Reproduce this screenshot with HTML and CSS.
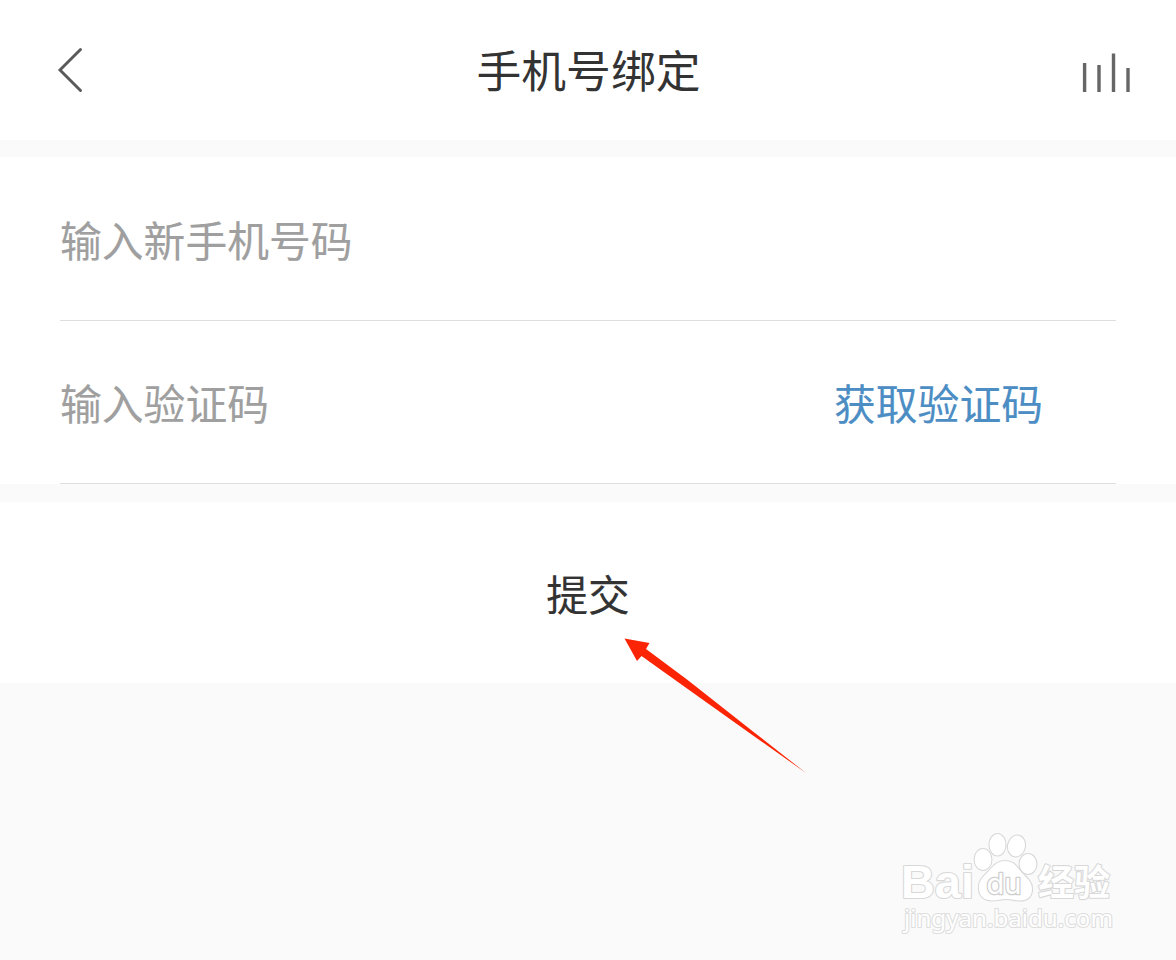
FILE: index.html
```html
<!DOCTYPE html>
<html lang="zh-CN">
<head>
    <meta charset="UTF-8" />
    <meta name="viewport" content="width=device-width, initial-scale=1" />
    <title>手机号绑定</title>
    <link rel="stylesheet" href="styles.css">
</head>
<body>
    <header class="header">
        <button type="button" class="icon-button" aria-label="返回">
            <svg width="28" height="48" viewBox="0 0 28 48" fill="none">
                <path d="M24.5 3.5L4 24L24.5 44.5" stroke="#5a5a5a" stroke-width="2.9" stroke-linecap="round" />
            </svg>
        </button>
        <h1>手机号绑定</h1>
        <button type="button" class="icon-button" aria-label="菜单">
            <svg width="52" height="44" viewBox="0 0 52 44" fill="none">
                <path d="M4.6 11V40M19 13V40M33.5 1.5V40M48 16V40" stroke="#666" stroke-width="3.4" />
            </svg>
        </button>
    </header>

    <form id="bind-form">
        <section class="fields">
            <div class="field">
                <input type="tel" name="phone" placeholder="输入新手机号码" />
            </div>
            <div class="field">
                <input type="text" name="code" placeholder="输入验证码" />
                <button type="button" class="get-code">获取验证码</button>
            </div>
        </section>
        <button type="submit" class="submit">提交</button>
    </form>

    <!-- arrow pointing at the submit button -->
    <svg class="arrow" width="190" height="142" viewBox="620 634 190 142">
        <path d="M624.5 638.5L649.5 643L646 649L687 679.5L753 731.5L806 773L753 735.5L687 688.5L641.5 656L637 661Z" fill="#fb2505" />
    </svg>

    <svg class="watermark" width="240" height="125" viewBox="890 820 240 125">
        <text class="mark" x="901" y="898" font-size="46" textLength="73" lengthAdjust="spacingAndGlyphs">Bai</text>
        <g class="paw">
            <ellipse cx="983" cy="859.5" rx="8.4" ry="10.5" />
            <ellipse cx="997.5" cy="844.8" rx="8" ry="10.7" />
            <ellipse cx="1016.5" cy="846" rx="8.4" ry="10.5" transform="rotate(12 1016.5 846)" />
            <ellipse cx="1028" cy="864" rx="8.4" ry="10" />
            <path d="M1005 861C996 861 992 868 987 873C981 878 978.5 883 979 889C979.5 897 985 900.5 992 900.5C998 900.5 1001 899 1006 899C1011 899 1015 900.5 1020 900.5C1028 900.5 1032 896 1032 889C1032 882 1027 878 1022 873C1017 867 1014 861 1005 861Z" />
        </g>
        <text class="mark du" x="986.5" y="894" font-size="29" textLength="35" lengthAdjust="spacingAndGlyphs">du</text>
        <text class="mark cjk" x="1038" y="896" font-size="36" textLength="72">经验</text>
        <text class="mark site" x="904" y="927" font-size="24" textLength="209" lengthAdjust="spacingAndGlyphs">jingyan.baidu.com</text>
    </svg>
</body>
</html>
```
FILE: styles.css
```css
* {
    box-sizing: border-box;
}
body {
    margin: 0;
    min-height: 100vh;
    background: #fafafa;
    color: #333;
    font-family: 'Noto Sans CJK SC', sans-serif;
    overflow: hidden;
}
button,
input {
    padding: 0;
    border: none;
    background: none;
    color: inherit;
    font-family: inherit;
    font-size: 41.8px;
    -webkit-text-stroke: 0.15px;
}
button {
    cursor: pointer;
}
.header {
    display: grid;
    grid-template-columns: 1fr auto 1fr;
    align-items: center;
    height: 140px;
    padding: 0 44px 0 56px;
    background: #fff;
}
.header h1 {
    margin: 0;
    padding: 0 11px 3px 0;
    font-size: 44.8px;
    font-weight: 400;
}
.icon-button {
    display: flex;
}
.icon-button:last-child {
    justify-self: end;
    padding-top: 8px;
}
.fields {
    margin-top: 17px;
    padding: 0 60px;
    background: #fff;
}
.field {
    display: flex;
    align-items: center;
    height: 164px;
    padding-right: 73px;
    border-bottom: 1px solid #dedede;
}
.field + .field {
    height: 163px;
    padding-bottom: 1px;
}
.field input {
    flex: 1;
    min-width: 0;
    height: 100px;
    outline: none;
}
.field input::placeholder {
    color: #9f9f9f;
    opacity: 1;
}
.get-code {
    color: #4c8dc4;
}
.submit {
    display: block;
    width: 100%;
    height: 181px;
    margin-top: 18px;
    background: #fff;
}
.arrow {
    position: absolute;
    left: 620px;
    top: 634px;
}
.watermark {
    position: absolute;
    left: 890px;
    top: 820px;
}
.mark,
.paw {
    fill: #fff;
    stroke: #d8d8d8;
    stroke-width: 2.2px;
    stroke-linejoin: round;
    paint-order: stroke;
}
.mark {
    font-family: 'Liberation Sans', sans-serif;
    font-weight: 700;
}
.du {
    font-family: Inter, sans-serif;
    font-weight: 400;
    stroke: #cfcfcf;
    stroke-width: 2.6px;
}
.cjk {
    font-family: 'Noto Sans CJK SC', sans-serif;
}
.site {
    font-family: 'Noto Sans', sans-serif;
    font-weight: 400;
    stroke: #dedede;
}
```
